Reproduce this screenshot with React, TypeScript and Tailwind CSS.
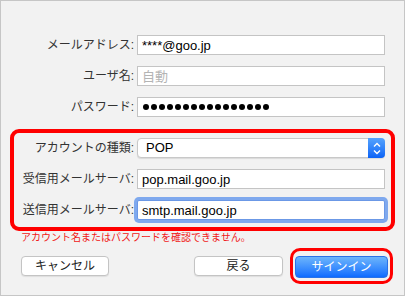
const font = "font-['Liberation_Sans','Noto_Sans_CJK_JP',sans-serif]"

function Label({ text, w }: { text: string; w: string }) {
  return <div className={`${w} shrink-0 text-right text-[12px] leading-[20px] text-[#333]`}>{text}</div>
}

function TextBox({ value, placeholder, focused }: { value?: string; placeholder?: string; focused?: boolean }) {
  return (
    <div
      className={`ml-[3px] flex h-[20px] w-[248px] items-center border bg-white pl-[4px] text-[13px] leading-none ${
        focused ? 'rounded-[2px] border-[#6b98e6] ring-[3px] ring-[#7fa9ee]' : 'border-[#c4c4c4]'
      }`}
    >
      {value ? <span className="text-black">{value}</span> : <span className="text-[#b4b4b4]">{placeholder}</span>}
    </div>
  )
}

function Dots() {
  return (
    <div className="ml-[3px] flex h-[20px] w-[248px] items-center gap-[2px] border border-[#c4c4c4] bg-white pl-[5px]">
      {Array.from({ length: 16 }).map((_, i) => (
        <span key={i} className="h-[6px] w-[6px] rounded-full bg-black" />
      ))}
    </div>
  )
}

function Select() {
  return (
    <div className="ml-[3px] flex h-[20px] w-[248px] items-stretch rounded-[4px] border border-[#c8c8c8] bg-white shadow-[0_1px_1px_rgba(0,0,0,0.1)]">
      <div className="flex flex-1 items-center pl-[8px] text-[13px] text-black">POP</div>
      <div className="-my-px -mr-px flex w-[17px] items-center justify-center rounded-r-[4px] bg-gradient-to-b from-[#55a3fd] to-[#0a62f6]">
        <svg width="8" height="13" viewBox="0 0 8 13" fill="none" stroke="white" strokeWidth="1.4">
          <path d="M1 4.5 L4 1.5 L7 4.5" />
          <path d="M1 8.5 L4 11.5 L7 8.5" />
        </svg>
      </div>
    </div>
  )
}

function Row({ children }: { children: React.ReactNode }) {
  return <div className="flex h-[20px] items-center">{children}</div>
}

export default function App() {
  return (
    <div className={`${font} flex h-[296px] w-[405px] flex-col border border-[#c6c6c6] bg-[#f2f2f2]`}>
      <div className="flex flex-col gap-[11px] pt-[34px]">
        <Row><Label text="メールアドレス:" w="w-[133px]" /><TextBox value="****@goo.jp" /></Row>
        <Row><Label text="ユーザ名:" w="w-[133px]" /><TextBox placeholder="自動" /></Row>
        <Row><Label text="パスワード:" w="w-[133px]" /><Dots /></Row>
      </div>

      <div className="ml-[9px] mt-[12px] flex w-[385px] flex-col gap-[11px] rounded-[9px] border-[4px] border-[#ff0000] pb-[7px] pr-[6px] pt-[5px]">
        <Row><Label text="アカウントの種類:" w="w-[120px]" /><Select /></Row>
        <Row><Label text="受信用メールサーバ:" w="w-[120px]" /><TextBox value="pop.mail.goo.jp" /></Row>
        <Row><Label text="送信用メールサーバ:" w="w-[120px]" /><TextBox value="smtp.mail.goo.jp" focused /></Row>
      </div>

      <p className="mt-[1px] pl-[20px] text-[10px] leading-[12px] text-[#f01818]">
        アカウント名またはパスワードを確認できません。
      </p>

      <div className="mt-[4px] flex items-center justify-between pl-[20px] pr-[11px]">
        <button className="h-[20px] w-[88px] rounded-[4px] border border-[#c4c4c4] bg-white text-[12px] text-[#222] shadow-[0_1px_1px_rgba(0,0,0,0.08)]">
          キャンセル
        </button>
        <div className="flex items-center gap-[7px]">
          <button className="h-[20px] w-[89px] rounded-[4px] border border-[#c4c4c4] bg-white text-[12px] text-[#222] shadow-[0_1px_1px_rgba(0,0,0,0.08)]">
            戻る
          </button>
          <div className="rounded-[10px] border-[3px] border-[#ff0000] px-[2px] py-[3px]">
            <button className="h-[22px] w-[93px] rounded-[4px] border border-[#2a72e8] bg-gradient-to-b from-[#6cb4fb] to-[#0d6bff] text-[12px] text-white">
              サインイン
            </button>
          </div>
        </div>
      </div>
    </div>
  )
}
